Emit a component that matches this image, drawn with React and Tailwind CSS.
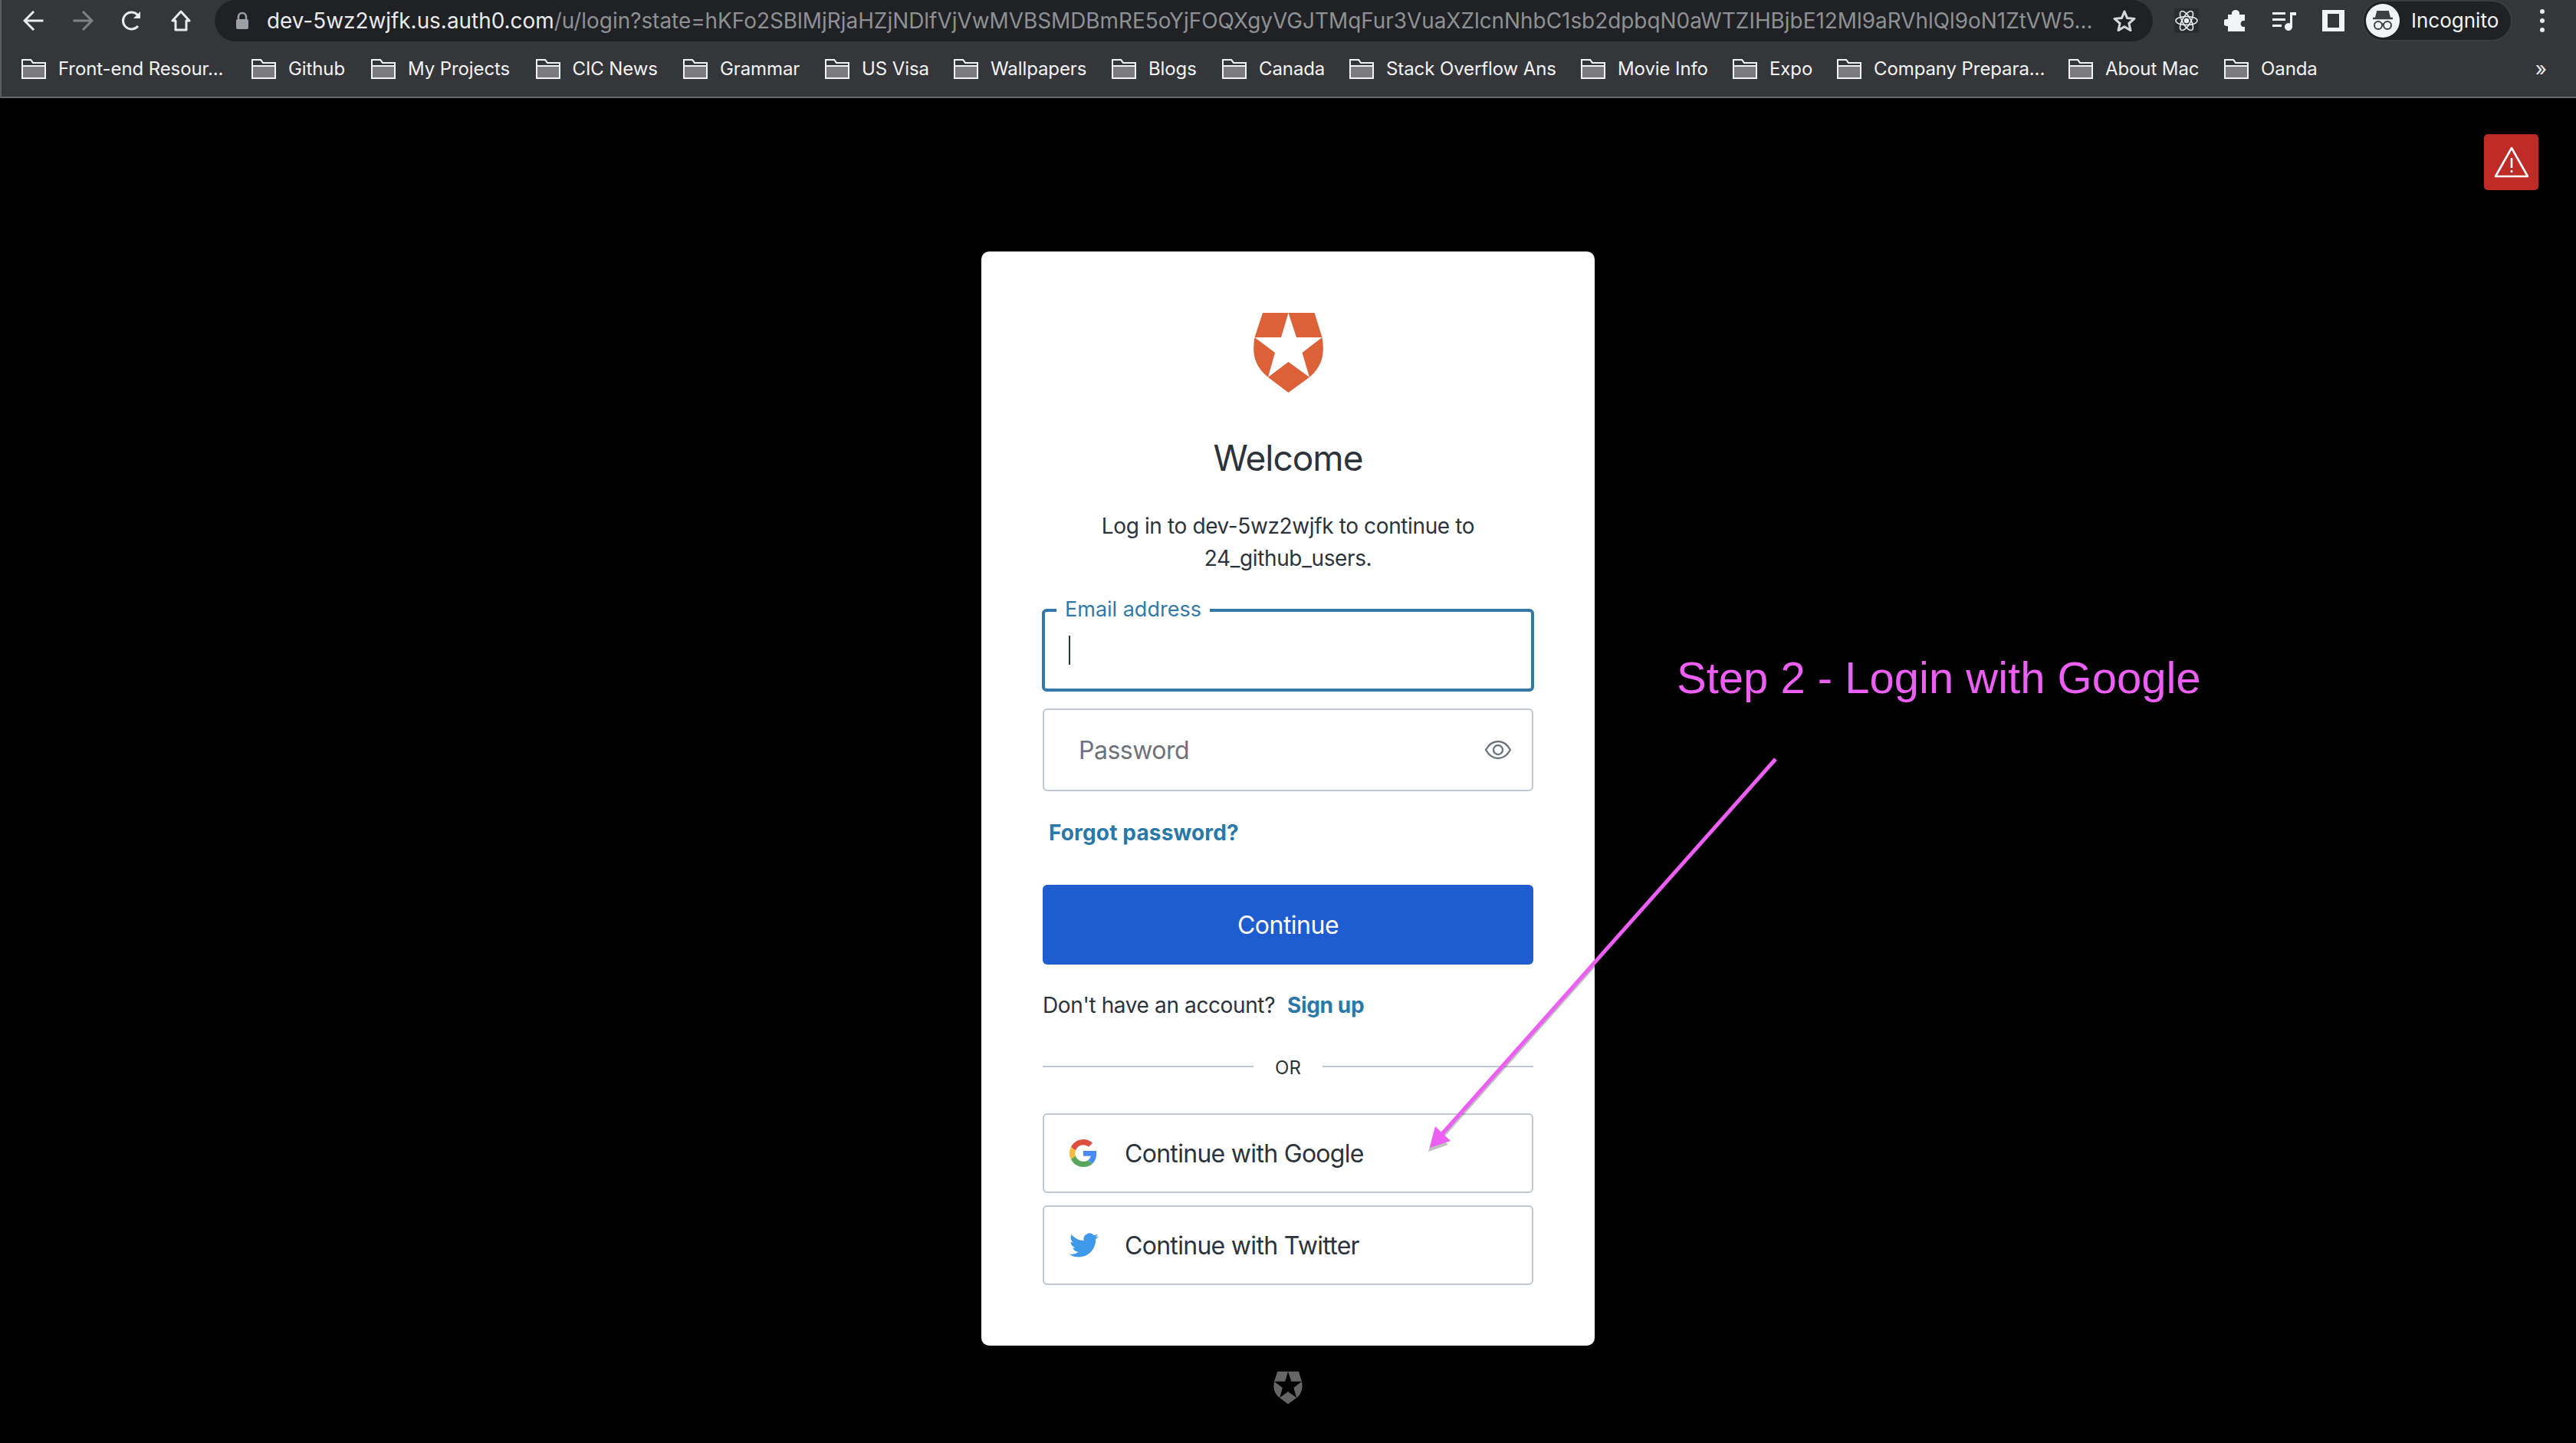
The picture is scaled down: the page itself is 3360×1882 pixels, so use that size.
const SANS = "font-['Inter','Noto_Sans',sans-serif]";

const bookmarks = [
  ["Front-end Resour...", "w-[300px]"],
  ["Github", "w-[156px]"],
  ["My Projects", "w-[214.5px]"],
  ["CIC News", "w-[192.5px]"],
  ["Grammar", "w-[185px]"],
  ["US Visa", "w-[168px]"],
  ["Wallpapers", "w-[206px]"],
  ["Blogs", "w-[144px]"],
  ["Canada", "w-[166px]"],
  ["Stack Overflow Ans", "w-[302px]"],
  ["Movie Info", "w-[198px]"],
  ["Expo", "w-[136px]"],
  ["Company Prepara...", "w-[302px]"],
  ["About Mac", "w-[203px]"],
  ["Oanda", "w-[150px]"],
];

function Folder() {
  return (
    <svg width="32" height="26" viewBox="0 0 32 26" className="shrink-0">
      <path d="M1 25V1h11l3 4h16v20z" fill="#7b7b7d" stroke="#f1f3f4" strokeWidth="2" />
      <path d="M1 9h30V5H15l-3-4H1z" fill="#35363a" stroke="#f1f3f4" strokeWidth="2" />
    </svg>
  );
}

function Shield({ fill, star, className }) {
  return (
    <svg viewBox="0 0 93 104" className={className}>
      <path d="M13 0H80.5L90.5 32C93.5 50 93 68 74 84L46.5 104L20 84C0 68 -.5 50 2.5 32Z" fill={fill} />
      <path d="M46.5 0L57 32H90.5L64.5 52L74 84L46.5 64L20 84L29 52L2.5 32H37Z" fill={star} />
    </svg>
  );
}

function Google() {
  return (
    <svg width="36" height="36" viewBox="0 0 48 48" className="shrink-0">
      <path fill="#dd4f3f" d="M24 9.5c3.54 0 6.71 1.22 9.21 3.6l6.85-6.85C35.9 2.38 30.47 0 24 0 14.62 0 6.51 5.38 2.56 13.22l7.98 6.19C12.43 13.72 17.74 9.5 24 9.5z" />
      <path fill="#4a8af4" d="M46.98 24.55c0-1.57-.15-3.09-.38-4.55H24v9.02h12.94c-.58 2.96-2.26 5.48-4.78 7.18l7.73 6c4.51-4.18 7.09-10.36 7.09-17.65z" />
      <path fill="#f6bc41" d="M10.53 28.59c-.48-1.45-.76-2.99-.76-4.59s.27-3.14.76-4.59l-7.98-6.19C.92 16.46 0 20.12 0 24c0 3.88.92 7.54 2.56 10.78l7.97-6.19z" />
      <path fill="#58a65c" d="M24 48c6.48 0 11.93-2.13 15.89-5.81l-7.73-6c-2.15 1.45-4.92 2.3-8.16 2.3-6.26 0-11.57-4.22-13.47-9.91l-7.98 6.19C6.51 42.62 14.62 48 24 48z" />
    </svg>
  );
}

function Twitter() {
  return (
    <svg width="38" height="38" viewBox="0 0 24 24" className="shrink-0" fill="#3f99ea">
      <path d="M23.953 4.57a10 10 0 01-2.825.775 4.958 4.958 0 002.163-2.723c-.951.555-2.005.959-3.127 1.184a4.92 4.92 0 00-8.384 4.482C7.69 8.095 4.067 6.13 1.64 3.162a4.822 4.822 0 00-.666 2.475c0 1.71.87 3.213 2.188 4.096a4.904 4.904 0 01-2.228-.616v.06a4.923 4.923 0 003.946 4.827 4.996 4.996 0 01-2.212.085 4.936 4.936 0 004.604 3.417 9.867 9.867 0 01-6.102 2.105c-.39 0-.779-.023-1.17-.067a13.995 13.995 0 007.557 2.209c9.053 0 13.998-7.496 13.998-13.985 0-.21 0-.42-.015-.63A9.935 9.935 0 0024 4.59z" />
    </svg>
  );
}

function SocialButton({ icon, label, className }) {
  return (
    <div className={`h-[104px] border-2 border-[#c2c8d0] rounded-[6px] flex items-center text-[32px] tracking-[-0.7px] text-[#2d333a] ${className}`}>
      <div className="w-[105px] pl-[33px] flex items-center">{icon}</div>
      <span className="mt-[2px]">{label}</span>
    </div>
  );
}

function Toolbar() {
  return (
    <div className={`h-[54px] flex items-center ${SANS}`}>
      <div className="w-[278px] flex items-center pl-[28px] shrink-0">
        <svg width="27" height="26" viewBox="0 0 27 26" fill="none" stroke="#e8eaed" strokeWidth="3" strokeLinecap="square"><path d="M25 13H3M13 2L2 13l11 11" /></svg>
        <svg width="27" height="26" viewBox="0 0 27 26" fill="none" stroke="#808184" strokeWidth="3" strokeLinecap="square" className="ml-[38px]"><path d="M2 13h22M14 2l11 11-11 11" /></svg>
        <svg width="28" height="26" viewBox="0 0 28 26" fill="none" stroke="#e8eaed" strokeWidth="3" className="ml-[36px]"><path d="M22 20a11 11 0 1 1 0-14" /><path d="M25 1v9h-9z" fill="#e8eaed" stroke="none" /></svg>
        <svg width="28" height="28" viewBox="0 0 28 28" fill="none" stroke="#e8eaed" strokeWidth="3" strokeLinejoin="round" className="ml-[36px]"><path d="M14 2L3 14h4v12h14V14h4z" /></svg>
      </div>
      <div className="w-[2528px] h-[54px] -mt-[1px] bg-[#202124] rounded-[27px] flex items-center pl-[26px] pr-[22px] shrink-0">
        <svg width="20" height="22" viewBox="0 0 20 22" className="shrink-0"><path d="M5 9V6a5 5 0 0 1 10 0v3" fill="none" stroke="#9aa0a6" strokeWidth="2.5" /><rect x="2" y="9" width="16" height="13" rx="2" fill="#9aa0a6" /></svg>
        <div className="ml-[22px] text-[27.9px] leading-[40px] whitespace-nowrap text-[#8e9194]">
          <span className="text-[#e8eaed]">dev-5wz2wjfk.us.auth0.com</span>/u/login?state=hKFo2SBlMjRjaHZjNDlfVjVwMVBSMDBmRE5oYjFOQXgyVGJTMqFur3VuaXZlcnNhbC1sb2dpbqN0aWTZIHBjbE12Ml9aRVhlQl9oN1ZtVW5...
        </div>
        <svg width="30" height="28" viewBox="0 0 30 28" fill="none" stroke="#d5d7da" strokeWidth="3" strokeLinejoin="round" className="ml-auto shrink-0"><path d="M15 2l3.6 8.6 9.4.8-7.1 6.1 2.1 9.1L15 21.8l-8 4.8 2.1-9.1L2 11.4l9.4-.8z" /></svg>
      </div>
      <div className="ml-[28px] w-[32px] h-[32px] shrink-0 bg-[#2b2c2f] flex items-center justify-center">
        <svg width="30" height="32" viewBox="0 0 30 32" fill="none" stroke="#e8eaed" strokeWidth="1.6">
          <ellipse cx="15" cy="16" rx="14" ry="5.5" />
          <ellipse cx="15" cy="16" rx="14" ry="5.5" transform="rotate(60 15 16)" />
          <ellipse cx="15" cy="16" rx="14" ry="5.5" transform="rotate(120 15 16)" />
          <circle cx="15" cy="16" r="2.5" fill="#e8eaed" />
        </svg>
      </div>
      <svg width="30" height="28" viewBox="0 0 30 28" fill="#f1f3f4" className="ml-[33px] shrink-0"><path d="M10 4a5 4 0 0 1 10 0v2h7v8h-3a4.5 4.5 0 0 0 0 8h3v6H5v-7H3a4.5 4.5 0 0 1 0-9h2V6h5z" /></svg>
      <svg width="31" height="26" viewBox="0 0 31 26" fill="#f1f3f4" className="ml-[33px] shrink-0"><path d="M0 2h17v3H0zM0 10h17v3H0zM0 18h12v3H0z" /><path d="M23 2h8v4h-5v15a5 5 0 1 1-3-4.5z" /></svg>
      <svg width="29" height="28" viewBox="0 0 29 28" className="ml-[34px] shrink-0"><path fillRule="evenodd" clipRule="evenodd" d="M0 0h29v28H0zM7 5v18h15V5z" fill="#f1f3f4" /></svg>
      <div className="ml-[23px] w-[196px] h-[54px] -mt-[1px] bg-[#202124] border-2 border-[#3c3d41] rounded-[27px] flex items-center pl-[3px] shrink-0">
        <div className="w-[44px] h-[44px] rounded-full bg-[#f1f3f4] flex items-center justify-center shrink-0">
          <svg width="30" height="30" viewBox="0 0 30 30" fill="none" stroke="#3c4043" strokeWidth="2"><path d="M8 3h14l2 8H6z" fill="#3c4043" /><path d="M2 12h26" strokeWidth="2.5" /><circle cx="9" cy="21" r="5" /><circle cx="21" cy="21" r="5" /><path d="M14 20c1-1 1-1 2 0" /></svg>
        </div>
        <span className="ml-[15px] text-[26px] text-[#f1f3f4] leading-none">Incognito</span>
      </div>
      <div className="ml-[36px] flex flex-col gap-[6px] shrink-0">
        <span className="w-[6px] h-[6px] rounded-full bg-[#e8eaed]" />
        <span className="w-[6px] h-[6px] rounded-full bg-[#e8eaed]" />
        <span className="w-[6px] h-[6px] rounded-full bg-[#e8eaed]" />
      </div>
    </div>
  );
}

function Bookmarks() {
  return (
    <div className={`h-[72px] flex items-center pl-[26px] pb-[1px] ${SANS}`}>
      {bookmarks.map(([name, w]) => (
        <div key={name} className={`${w} flex items-center gap-[16px] shrink-0`}>
          <Folder />
          <span className="text-[24px] tracking-[-0.1px] text-[#f1f3f4] whitespace-nowrap leading-none">{name}</span>
        </div>
      ))}
      <span className="ml-auto mr-[38px] text-[26px] text-[#e8eaed] leading-none">»</span>
    </div>
  );
}

export default function App() {
  return (
    <div className={`relative min-h-[1882px] bg-black overflow-hidden ${SANS}`}>
      <div className="h-[128px] bg-[#35363a] border-b-2 border-[#66676a] border-l-2 border-l-[#5a5b5e]">
        <Toolbar />
        <Bookmarks />
      </div>

      <div className="flex flex-col items-center pt-[200px]">
        <div className="w-[800px] h-[1427px] bg-white rounded-[10px] px-[80px] pt-[80px] flex flex-col text-[#2d333a]">
          <Shield fill="#dc6138" star="#ffffff" className="w-[93px] h-[104px] self-center shrink-0" />
          <h1 className="mt-[55px] text-center text-[46px] leading-[60px] text-[#2d333a] tracking-[-1px]">Welcome</h1>
          <p className="mt-[38px] text-center text-[28px] leading-[42px] tracking-[-0.38px] text-[#2d333a]">
            Log in to dev-5wz2wjfk to continue to
            <br />
            24_github_users.
          </p>

          <div className="relative mt-[45px] -mx-px h-[108px] border-[4px] border-[#3379a8] rounded-[6px]">
            <span className="absolute -top-[16px] left-[15px] px-[11px] bg-white text-[27px] h-[26px] leading-[26px] text-[#3379a8]">Email address</span>
            <span className="absolute top-[31px] left-[31px] w-[2px] h-[38px] bg-[#2d333a]" />
          </div>

          <div className="mt-[22px] h-[108px] border-2 border-[#c2c8d0] rounded-[6px] flex items-center pl-[45px] pr-[26px]">
            <span className="mt-[2px] text-[32px] tracking-[-0.5px] text-[#6f727a]">Password</span>
            <svg width="36" height="26" viewBox="0 0 36 26" fill="none" stroke="#6f737b" strokeWidth="2.4" className="ml-auto">
              <path d="M2 13C6 6 11 2 18 2s12 4 16 11c-4 7-9 11-16 11S6 20 2 13z" strokeLinejoin="round" />
              <circle cx="18" cy="13" r="6" />
            </svg>
          </div>

          <a className="mt-[33px] ml-[8px] text-[28px] leading-[42px] font-bold tracking-[0.15px] text-[#2a78a8]">Forgot password?</a>

          <div className="mt-[47px] h-[104px] bg-[#1f5ccf] rounded-[6px] flex items-center justify-center text-[32px] tracking-[-0.5px] text-white"><span className="mt-[2px]">Continue</span></div>

          <div className="mt-[32px] text-[28px] leading-[42px] tracking-[-0.38px] text-[#2d333a] flex">
            <span>Don't have an account?</span>
            <a className="ml-[16px] font-bold text-[#2a78a8]">Sign up</a>
          </div>

          <div className="mt-[40px] h-[42px] flex items-center text-[24px] text-[#2d333a]">
            <div className="flex-1 h-[2px] bg-[#c2c8d0] -mt-[4px]" />
            <span className="w-[90px] text-center">OR</span>
            <div className="flex-1 h-[2px] bg-[#c2c8d0] -mt-[4px]" />
          </div>

          <SocialButton className="mt-[38px]" icon={<Google />} label="Continue with Google" />
          <SocialButton className="mt-[16px]" icon={<Twitter />} label="Continue with Twitter" />
        </div>

        <Shield fill="#666666" star="#000000" className="mt-[33px] w-[38px] h-[44px]" />
      </div>

      <div className="absolute left-[3240px] top-[175px] w-[71px] h-[73px] rounded-[5px] bg-[#bf2c27] flex items-center justify-center">
        <svg width="46" height="42" viewBox="0 0 46 42" fill="none" stroke="#ffffff" strokeWidth="2.6" strokeLinejoin="round">
          <path d="M23 2L44 39H2z" />
          <path d="M23 15v13M23 31v3" />
        </svg>
      </div>

      <span className="absolute left-[2187px] top-[851px] font-['Liberation_Sans',sans-serif] text-[58px] leading-[66px] text-[#ec5ef4] whitespace-nowrap">Step 2 - Login with Google</span>

      <svg className="absolute left-[1850px] top-[980px] pointer-events-none" width="480" height="530" viewBox="1850 980 480 530">
        <path d="M2315 990L1880 1480" stroke="#000000" strokeOpacity="0.25" strokeWidth="6" transform="translate(-2 5)" />
        <path d="M1872 1471L1891 1488L1865 1497Z" fill="#000000" fillOpacity="0.25" transform="translate(-2 5)" />
        <path d="M2316 990L1880 1480" stroke="#ec5ef4" strokeWidth="5" />
        <path d="M1872 1469L1892 1488L1865 1497Z" fill="#ec5ef4" />
      </svg>
    </div>
  );
}
